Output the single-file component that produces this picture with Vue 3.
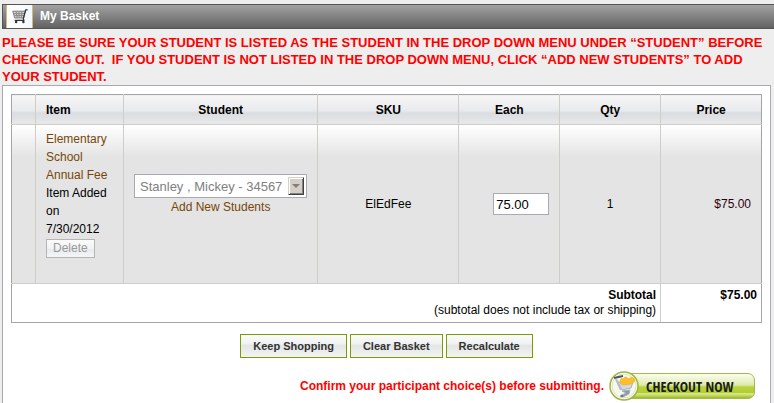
<script setup>
import { ref } from 'vue'

const student = ref('34567')
const price = ref('75.00')
</script>

<template>
  <main class="page">
    <header class="bar">
      <span class="bar-icon">
        <svg viewBox="0 0 26 23" width="26" height="23" aria-hidden="true">
          <path d="M6 6H19L17.500 13H8Z" fill="#d2d2d2" stroke="#777" />
          <path d="M7 8.500H18M8 10.500H18M9.500 6L10.500 13M12.500 6V13M15.500 6L15 13" stroke="#888" fill="none" />
          <path d="M21.500 4.500H19.500L17 13.500L17.500 15.500H8" stroke="#333" stroke-width="1.300" fill="none" />
          <circle cx="9.500" cy="17.300" r="1.300" fill="#333" />
          <circle cx="17" cy="17.300" r="1.300" fill="#333" />
        </svg>
      </span>
      <h1>My Basket</h1>
    </header>

    <p class="warning">
      PLEASE BE SURE YOUR STUDENT IS LISTED AS THE STUDENT IN THE DROP DOWN MENU UNDER “STUDENT” BEFORE CHECKING OUT.&nbsp; IF YOU STUDENT IS NOT LISTED IN THE DROP DOWN MENU, CLICK “ADD NEW STUDENTS” TO ADD YOUR STUDENT.
    </p>

    <section class="panel">
      <table class="basket">
        <colgroup>
          <col class="c-mark"><col class="c-item"><col><col class="c-sku"><col class="c-num"><col class="c-num"><col class="c-num">
        </colgroup>
        <thead>
          <tr>
            <th></th>
            <th class="item">Item</th>
            <th>Student</th>
            <th>SKU</th>
            <th>Each</th>
            <th>Qty</th>
            <th>Price</th>
          </tr>
        </thead>
        <tbody>
          <tr>
            <td></td>
            <td class="item">
              <a href="#">Elementary School Annual Fee</a>
              <div>Item Added on 7/30/2012</div>
              <button type="button" class="delete" disabled>Delete</button>
            </td>
            <td class="student">
              <div class="picker">
                <select v-model="student" aria-label="Student" disabled>
                  <option value="34567">Stanley , Mickey - 34567</option>
                </select>
                <span class="arrow"></span>
              </div>
              <a href="#">Add New Students</a>
            </td>
            <td>ElEdFee</td>
            <td><input v-model="price" class="each" type="text" aria-label="Each"></td>
            <td>1</td>
            <td class="price">$75.00</td>
          </tr>
        </tbody>
        <tfoot>
          <tr>
            <td colspan="6"><strong>Subtotal</strong><br>(subtotal does not include tax or shipping)</td>
            <td><strong>$75.00</strong></td>
          </tr>
        </tfoot>
      </table>

      <div class="actions">
        <button type="button">Keep Shopping</button>
        <button type="button">Clear Basket</button>
        <button type="button">Recalculate</button>
      </div>

      <div class="confirm">
        <span>Confirm your participant choice(s) before submitting.</span>
        <button type="button" class="checkout">
          <svg class="badge" viewBox="0 0 30 30" width="30" height="30" aria-hidden="true">
            <circle cx="15" cy="15" r="14" fill="#fff" stroke="#9cb640" stroke-width="1.500" />
            <circle cx="15" cy="15" r="12" fill="#f6f8f0" stroke="#dbe5b0" />
            <path d="M9 11L24 11L22 17L13 19Z" fill="#d3d9e1" stroke="#a9b2be" />
            <path d="M11 12Q11 6 14 8Q17 4 19 8Q25 4 26 10L22 13L14 14Z" fill="#fdbf2a" stroke="#eeae2a" stroke-width=".7" />
            <path d="M5 7L14 5" fill="none" stroke="#4c5460" stroke-width="2" />
            <path d="M7 8L12 19" fill="none" stroke="#b4bdc9" stroke-width="2" />
            <path d="M13 20L21 19L20 23L14 26L11 25L17 22Z" fill="#8d99a9" stroke="#a9b2be" />
            <circle cx="13" cy="25" r="1.300" fill="#6d7683" />
          </svg>
          <span>CHECKOUT NOW</span>
        </button>
      </div>
    </section>
  </main>
</template>

<style>
html,
body,
#app {
  height: 100%;
}

body {
  margin: 0;
  background: #eeeeee;
}
</style>

<style scoped>
.page {
  box-sizing: border-box;
  min-height: 100%;
  display: flex;
  flex-direction: column;
  padding: 4px 0 0 2px;
  font: 12px/18px "Liberation Sans", Arial, sans-serif;
  color: #000;
}

button,
select,
input {
  box-sizing: border-box;
  margin: 0;
  font-family: inherit;
}

.bar {
  display: flex;
  align-items: center;
  gap: 7px;
  padding-left: 3px;
  border: 1px solid #555;
  border-right: 0;
  background: linear-gradient(#a2a2a2, #626262);
}

.bar-icon {
  display: flex;
  box-sizing: border-box;
  width: 27px;
  height: 23px;
  border: solid #d9b676;
  border-width: 0 1px;
  background: linear-gradient(90deg, #fff, #f4f8fb);
}

h1 {
  margin: 0;
  font-size: 12px;
  line-height: 23px;
  color: #fff;
}

.warning {
  margin: 5px 8px 0 0;
  font-size: 13px;
  line-height: 17px;
  font-weight: bold;
  color: #f00;
}

.panel {
  flex: 1;
  margin-right: 3px;
  padding: 8px 8px 0;
  border: 1px solid #aaa8b0;
  border-bottom: 0;
  background: #fff;
}

.basket {
  width: 100%;
  table-layout: fixed;
  border-collapse: collapse;
  border: 1px solid #a5a5a5;
}

.c-mark { width: 24px; }
.c-item { width: 88px; }
.c-sku { width: 18.8%; }
.c-num { width: 13.45%; }

th,
td {
  padding: 0 10px;
  border: 1px solid #d0cdc6;
  text-align: center;
}

thead th {
  height: 29px;
  border-top-color: #a5a5a5;
  background: linear-gradient(#f6f6f6, #e8e9ec 56%, #d9dbe0 58%, #e9e9e9);
}

tbody td {
  height: 158px;
  background: #e4e4e4 linear-gradient(#fff, #e4e4e4) 0 0 / 100% 32px no-repeat;
}

th:first-child,
td:first-child {
  border-left-color: #a5a5a5;
}

th:last-child,
td:last-child {
  border-right-color: #a5a5a5;
}

.basket .item {
  padding-right: 8px;
  text-align: left;
}

tbody .item {
  box-sizing: border-box;
  padding-top: 5px;
  vertical-align: top;
}

tbody .student {
  box-sizing: border-box;
  padding-bottom: 18px;
}

.basket .price {
  text-align: right;
  color: #300010;
}

a {
  color: #764709;
  text-decoration: none;
}

.delete {
  display: block;
  height: 19px;
  margin-top: 1px;
  padding: 0 6px;
  border: 1px solid #b5b5b5;
  background: linear-gradient(#fafafa, #f1f3f4 50%, #e7ebed 55%, #f5f5f5);
  font-size: 12px;
  line-height: 17px;
  color: #999;
}

.picker {
  position: relative;
}

.picker select {
  display: block;
  width: 100%;
  height: 24px;
  padding: 0 20px 0 5px;
  border: 1px solid #aaa8b0;
  border-radius: 0;
  background: #fff;
  appearance: none;
  font-size: 13px;
  color: #808080;
  opacity: 1;
}

.arrow {
  position: absolute;
  top: 3px;
  right: 3px;
  display: grid;
  place-items: center;
  box-sizing: border-box;
  width: 16px;
  height: 18px;
  border: 1px solid;
  border-color: #d4d0c8 #404040 #404040 #d4d0c8;
  background: #d4d0c8;
  box-shadow: inset 1px 1px #fff, inset -1px -1px #808080;
}

.arrow::after {
  content: "";
  border: 4px solid transparent;
  border-top-color: #808080;
  border-bottom: 0;
}

.each {
  display: block;
  width: 56px;
  height: 22px;
  margin-left: auto;
  padding: 0 2px;
  border: 1px solid #aaa8b0;
  background: #fff;
  font-size: 13px;
}

tfoot td {
  padding: 4px;
  border-bottom-color: #a5a5a5;
  text-align: right;
  vertical-align: top;
  line-height: 15px;
}

.actions {
  display: flex;
  justify-content: center;
  gap: 3px;
  margin-top: 11px;
}

.actions button {
  height: 24px;
  padding: 0 12px;
  border: 1px solid #7d9c04;
  background: linear-gradient(#fbfbfb, #eff1f1 42%, #e2e5e5 45%, #f3f3f3);
  font-size: 11px;
  font-weight: bold;
  color: #333;
}

.confirm {
  display: flex;
  align-items: center;
  justify-content: flex-end;
  gap: 5px;
  margin-top: 13px;
  padding-right: 7px;
  font-weight: bold;
  color: #f00;
}

.checkout {
  position: relative;
  display: flex;
  align-items: center;
  height: 30px;
  padding: 0;
  border: 0;
  background: none;
  color: #1c1c1c;
}

.badge {
  position: absolute;
  left: 0;
  top: 0;
}

.checkout span {
  box-sizing: border-box;
  width: 131px;
  height: 26px;
  margin-left: 15px;
  padding-left: 21px;
  border: 1px solid #a5bb45;
  border-radius: 0 7px 7px 0;
  background: linear-gradient(#fbfdf0, #deebae 45%, #b7d23c 55%, #b2cf2c 78%, #dcea9c 82%, #9cbb1f);
  font: bold 14px/25px "Open Sans Condensed", "Liberation Sans Narrow", "Arial Narrow", sans-serif;
  text-align: left;
  white-space: nowrap;
}
</style>
